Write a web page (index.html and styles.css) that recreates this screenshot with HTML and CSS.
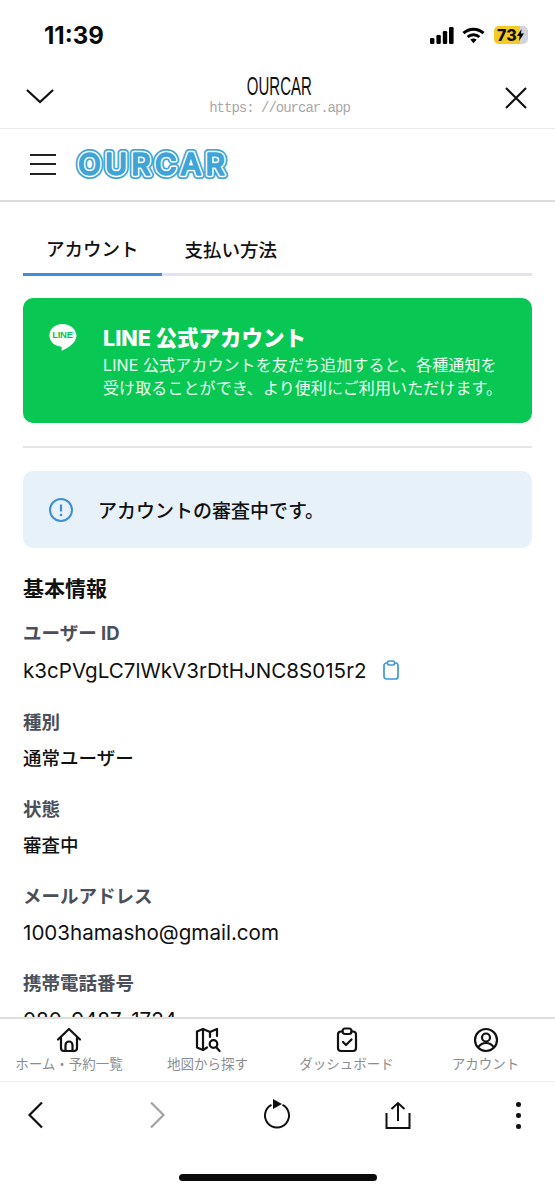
FILE: index.html
```html
<!DOCTYPE html>
<html lang="ja">
<head>
<meta charset="utf-8">
<title>OURCAR</title>
<link rel="stylesheet" href="styles.css">
</head>
<body>
<div class="screen">
  <div class="status">
    <span class="time">11:39</span>
    <div class="status-icons">
      <svg class="signal" width="24" height="17" viewBox="0 0 24 17"><rect x="0" y="11" width="4.4" height="6" rx="1.2"/><rect x="6.4" y="8" width="4.4" height="9" rx="1.2"/><rect x="12.8" y="4" width="4.4" height="13" rx="1.2"/><rect x="19" y="0" width="4.6" height="17" rx="1.2"/></svg>
      <svg class="wifi" width="23" height="17" viewBox="0 0 23 17"><path d="M1.5 6.2C7.3 .9 15.7 .9 21.5 6.2" fill="none" stroke="#000" stroke-width="3"/><path d="M5.6 10C9 7 14 7 17.4 10" fill="none" stroke="#000" stroke-width="3"/><path d="M8.3 12.6c2-1.500 4.400-1.500 6.400 0l-3.200 3.700z"/></svg>
      <div class="battery"><span class="battery-fill"></span><span class="battery-num">73</span><svg class="bolt" width="7" height="12" viewBox="0 0 7 12"><path d="M4.500 0 0 7h2.600L2 12l5-7.400H4z"/></svg></div>
    </div>
  </div>

  <header class="browser-head">
    <svg class="ico chev" width="30" height="18" viewBox="0 0 30 18"><path d="M2 3l13 12L28 3" fill="none" stroke="#111" stroke-width="2.200"/></svg>
    <div class="browser-title">
      <div class="site">OURCAR</div>
      <div class="url">https: //ourcar.app</div>
    </div>
    <svg class="ico close" width="24" height="24" viewBox="0 0 24 24"><path d="M2 2l20 20M22 2L2 22" fill="none" stroke="#111" stroke-width="2.200"/></svg>
  </header>

  <div class="app-head">
    <div class="burger"><i></i><i></i><i></i></div>
    <svg class="logo" width="160" height="40" viewBox="0 0 160 40">
      <text class="logo-a" x="5" y="31" textLength="147" lengthAdjust="spacing">OURCAR</text>
      <text class="logo-b" x="5" y="31" textLength="147" lengthAdjust="spacing">OURCAR</text>
      <text class="logo-c" x="5" y="31" textLength="147" lengthAdjust="spacing">OURCAR</text>
    </svg>
  </div>

  <main class="content">
    <div class="tabs">
      <div class="tab active">アカウント</div>
      <div class="tab">支払い方法</div>
    </div>

    <section class="line-card">
      <svg class="line-ico" width="29" height="28" viewBox="0 0 29 29"><path fill="#fff" d="M14.500 1C6.700 1 1 6.200 1 13c0 6.500 5.500 10.800 11.500 11.400.8.100 1.300.6 1.200 1.300l-.2 2.300c0 .6.500.8 1 .5 3.900-2.100 14.500-7.300 14.500-15.500C28.500 6.200 22.300 1 14.500 1z"/></svg>
      <span class="line-mark">LINE</span>
      <div class="line-body">
        <h2 class="line-title">LINE 公式アカウント</h2>
        <p class="line-text">LINE 公式アカウントを友だち追加すると、各種通知を<br>受け取ることができ、より便利にご利用いただけます。</p>
      </div>
    </section>

    <hr class="divider">

    <section class="notice">
      <svg width="26" height="26" viewBox="0 0 26 26"><circle cx="13" cy="13" r="11" fill="none" stroke="#3f8fd6" stroke-width="2"/><path d="M13 7.500v7" stroke="#3f8fd6" stroke-width="2.200" fill="none"/><circle cx="13" cy="18" r="1.300" fill="#3f8fd6"/></svg>
      <span>アカウントの審査中です。</span>
    </section>

    <h3 class="section-title">基本情報</h3>

    <dl class="fields">
      <div class="field field-id">
        <dt>ユーザー ID</dt>
        <dd><span class="latin">k3cPVgLC7lWkV3rDtHJNC8S015r2</span>
          <svg class="copy" width="16" height="20" viewBox="0 0 16 20"><path d="M4.500 3H3.500A2.500 2.500 0 0 0 1 5.500v11A2.500 2.500 0 0 0 3.500 19h9a2.500 2.500 0 0 0 2.500-2.500v-11A2.500 2.500 0 0 0 12.500 3h-1" fill="none" stroke="#3f97d6" stroke-width="1.700"/><rect x="4.500" y="1" width="7" height="4" rx="1.500" fill="none" stroke="#3f97d6" stroke-width="1.700"/></svg>
        </dd>
      </div>
      <div class="field"><dt>種別</dt><dd>通常ユーザー</dd></div>
      <div class="field"><dt>状態</dt><dd>審査中</dd></div>
      <div class="field"><dt>メールアドレス</dt><dd><span class="latin">1003hamasho@gmail.com</span></dd></div>
      <div class="field"><dt>携帯電話番号</dt><dd><span class="latin">080-9487-1724</span></dd></div>
    </dl>
  </main>

  <nav class="tabbar">
    <div class="tabbar-item">
      <svg width="26" height="26" viewBox="0 0 26 26"><g fill="none" stroke="#111" stroke-width="2.200" stroke-linejoin="round" stroke-linecap="round"><path d="M2 12.500 13 2l11 10.500"/><path d="M5 10.500V21a3 3 0 0 0 3 3h10a3 3 0 0 0 3-3V10.500"/><path d="M9.500 24v-6a3.500 3.500 0 0 1 7 0v6"/></g></svg>
      <span>ホーム・予約一覧</span>
    </div>
    <div class="tabbar-item">
      <svg width="26" height="26" viewBox="0 0 26 26"><g fill="none" stroke="#111" stroke-width="2.200" stroke-linejoin="round" stroke-linecap="round"><path d="M12 20.500 8 23l-6-2.500V4.500L8 2l7 3 7-3v7"/><path d="M8 2v21M15 5v5"/><circle cx="18.500" cy="17" r="3.800"/><path d="M21.500 20.500 24.500 24"/></g></svg>
      <span>地図から探す</span>
    </div>
    <div class="tabbar-item">
      <svg width="26" height="26" viewBox="0 0 26 26"><g fill="none" stroke="#111" stroke-width="2.200" stroke-linejoin="round" stroke-linecap="round"><path d="M8.500 4.500H7a3 3 0 0 0-3 3V21a3 3 0 0 0 3 3h12a3 3 0 0 0 3-3V7.500a3 3 0 0 0-3-3h-1.500"/><rect x="8.500" y="1.500" width="9" height="5.500" rx="2.500"/><path d="m9 15 3 3 5.500-5.500"/></g></svg>
      <span>ダッシュボード</span>
    </div>
    <div class="tabbar-item">
      <svg width="26" height="26" viewBox="0 0 26 26"><g fill="none" stroke="#111" stroke-width="2.200" stroke-linecap="round"><circle cx="13" cy="13" r="11"/><circle cx="13" cy="10.500" r="4"/><path d="M5.500 20c2-3 4.500-4 7.500-4s5.500 1 7.500 4"/></g></svg>
      <span>アカウント</span>
    </div>
  </nav>

  <footer class="browser-foot">
    <div class="foot-row">
      <svg width="18" height="28" viewBox="0 0 18 28"><path d="M15 1.500 2.500 14 15 26.500" fill="none" stroke="#111" stroke-width="2.200"/></svg>
      <svg width="18" height="28" viewBox="0 0 18 28"><path d="M3 1.500 15.500 14 3 26.500" fill="none" stroke="#a3a3a3" stroke-width="2.200"/></svg>
      <svg class="reload" width="28" height="30" viewBox="0 0 28 30"><path d="M8.500 5.800A12 12 0 1 0 19.500 5.800" fill="none" stroke="#111" stroke-width="2"/><path d="M10 0l9 5-9 5z" fill="#111"/></svg>
      <svg width="26" height="28" viewBox="0 0 26 28"><g fill="none" stroke="#111" stroke-width="2"><path d="M1.500 12V27H24.500V12"/><path d="M13 20V2M6.500 8 13 2l6.500 6"/></g></svg>
      <div class="dots"><i></i><i></i><i></i></div>
    </div>
    <div class="home-bar"></div>
  </footer>
</div>
</body>
</html>
```

FILE: styles.css
```css
* { box-sizing: border-box; }
html, body { margin: 0; padding: 0; background: #fff; }
body { font-family: "Inter", "Noto Sans CJK JP", sans-serif; color: #111; }
.screen { width: 555px; height: 1200px; display: flex; flex-direction: column; overflow: hidden; }

.status { height: 64px; flex: none; display: flex; justify-content: space-between; align-items: flex-start; padding: 22px 27px 0 44px; }
.time { font: 700 24px/26px "Inter", sans-serif; color: #0a0a0a; margin-top: 1px; }
.status-icons { display: flex; align-items: center; gap: 8px; height: 26px; }
.status-icons svg { display: block; }
.wifi { margin-right: 1px; }
.battery { position: relative; width: 34px; height: 18px; background: #d3d3db; border-radius: 5px; overflow: hidden; display: flex; align-items: center; padding-left: 3px; }
.battery-fill { position: absolute; left: 0; top: 0; bottom: 0; width: 26px; background: #f5c926; }
.battery-num { position: relative; font: 800 16px/18px "Inter", sans-serif; color: #111; }
.bolt { position: relative; }

.browser-head { height: 65px; flex: none; display: flex; align-items: center; justify-content: space-between; padding: 0 28px 4px 25px; border-bottom: 1px solid #e8e8e8; }
.chev { margin-top: 4px; }
.close { margin-top: 8px; margin-right: -1px; }
.browser-title { text-align: center; margin-top: 2px; }
.site { font: 400 25px/26px "Liberation Sans", sans-serif; color: #111; transform: scaleX(.6); }
.url { font: 400 14px/18px "Liberation Mono", monospace; color: #a8a8a8; letter-spacing: -1px; }

.app-head { height: 73px; flex: none; display: flex; align-items: center; padding: 0 0 1px 30px; gap: 17px; border-bottom: 2px solid #dcdcdc; }
.burger { width: 26px; display: flex; flex-direction: column; gap: 7.500px; }
.burger i { display: block; height: 2px; background: #222; }
.logo { display: block; }
.logo text { font: 500 30px "Inter", sans-serif; }
.logo-a { fill: #3fa5d8; stroke: #3fa5d8; stroke-width: 8px; stroke-linejoin: round; }
.logo-b { fill: #fff; stroke: #fff; stroke-width: 4.500px; stroke-linejoin: round; }
.logo-c { fill: #3fa5d8; stroke: #3fa5d8; stroke-width: 1.500px; stroke-linejoin: round; }

.content { flex: 1; min-height: 0; overflow: hidden; padding: 0 23px; }

.tabs { display: flex; height: 74px; border-bottom: 3px solid #e2e3ee; }
.tab { height: 74px; display: flex; align-items: center; padding: 20px 23px 0; font-size: 18.500px; font-weight: 500; color: #111; margin-bottom: -3px; white-space: nowrap; }
.tab.active { border-bottom: 3px solid #3d8fd8; }

.line-card { position: relative; margin-top: 22px; height: 125px; background: #09c753; border-radius: 10px; display: flex; padding: 26px 20px 0 25px; color: #fff; }
.line-ico { flex: none; margin-top: -1px; }
.line-mark { position: absolute; left: 27px; top: 31px; width: 25px; font: 700 9.500px/11px "Liberation Sans", sans-serif; letter-spacing: -.3px; color: #09c753; text-align: center; }
.line-body { margin-left: 26px; }
.line-title { margin: 0; font-size: 21.500px; line-height: 28px; font-weight: 800; }
.line-text { margin: 2px 0 0; font-size: 16px; line-height: 23px; font-weight: 400; letter-spacing: .1px; color: #eafff2; white-space: nowrap; }

.divider { border: 0; height: 2px; background: #e6e6e8; margin: 23px 0 0; }

.notice { margin-top: 23px; height: 77px; background: #e6f1fa; border-radius: 10px; display: flex; align-items: center; padding-left: 25px; gap: 24px; font-size: 19px; font-weight: 500; color: #111; }
.notice svg { flex: none; }

.section-title { margin: 25px 0 0; font-size: 21px; line-height: 32px; font-weight: 700; color: #111; }

.fields { margin: 15px 0 0; }
.field { margin: 0 0 24.500px; }
.field dt { font-size: 18.500px; line-height: 26px; font-weight: 700; color: #4a4f5a; }
.field dd { margin: 9.500px 0 0; font-size: 18.500px; line-height: 27px; font-weight: 500; color: #111; display: flex; align-items: center; gap: 17px; white-space: nowrap; }
.field-id dd { min-height: 29px; }
.latin { font-size: 20.600px; font-weight: 400; }
.copy { flex: none; }

.tabbar { height: 65px; flex: none; display: grid; grid-template-columns: 138px 139px 139px 139px; border-top: 2px solid #dedede; border-bottom: 1px solid #ececec; }
.tabbar-item { display: flex; flex-direction: column; align-items: center; padding-top: 8px; }
.tabbar-item svg { display: block; flex: none; }
.tabbar-item span { font-size: 13.500px; line-height: 18px; margin-top: 2px; color: #8a8d92; white-space: nowrap; }

.browser-foot { height: 118px; flex: none; display: flex; flex-direction: column; align-items: center; }
.foot-row { width: 603px; margin-left: -24px; align-self: flex-start; flex: none; height: 93px; display: grid; grid-template-columns: repeat(5, 1fr); align-items: start; justify-items: center; padding-top: 19px; }
.reload { margin-top: -2px; }
.dots { display: flex; flex-direction: column; gap: 6.500px; padding-top: 1px; }
.dots i { display: block; width: 4.500px; height: 4.500px; border-radius: 50%; background: #111; }
.home-bar { width: 198px; height: 7px; border-radius: 4px; background: #0a0a0a; margin-top: -1px; }
```
